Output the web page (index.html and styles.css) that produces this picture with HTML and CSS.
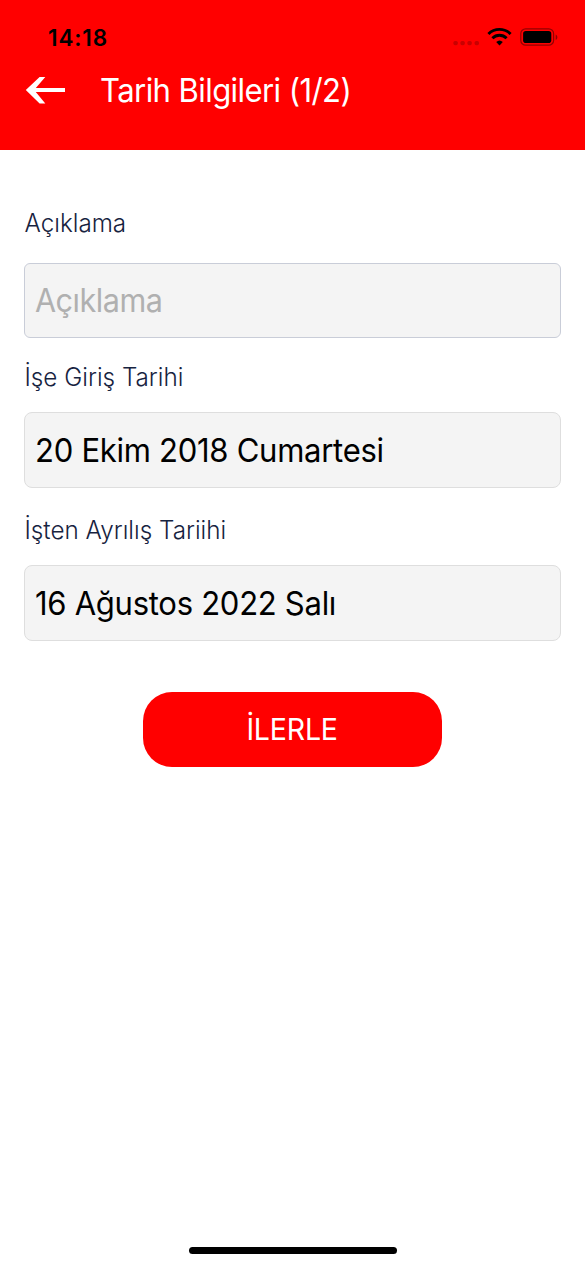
FILE: index.html
```html
<!DOCTYPE html>
<html lang="tr">
<head>
<meta charset="utf-8">
<title>Tarih Bilgileri</title>
<link rel="stylesheet" href="styles.css">
</head>
<body>
<div class="screen">
  <header class="header">
    <div class="status">
      <span class="time">14:18</span>
      <svg class="status-icons" width="106" height="24" viewBox="0 0 106 24">
        <g fill="#c90000">
          <rect x="0.4" y="16" width="4.4" height="4.2" rx="1.6"/>
          <rect x="7.4" y="16" width="4.4" height="4.2" rx="1.6"/>
          <rect x="14.4" y="16" width="4.4" height="4.2" rx="1.6"/>
          <rect x="21.6" y="16" width="4.4" height="4.2" rx="1.6"/>
        </g>
        <g fill="none" stroke="#000" stroke-width="2.9">
          <path d="M35.4 9a15.6 15.6 0 0 1 22.2 0"/>
          <path d="M39.4 13.2a10 10 0 0 1 14.2 0"/>
        </g>
        <path d="M46.5 20.5l-3.3-3.4a4.8 4.8 0 0 1 6.6 0z"/>
        <rect x="67.8" y="3.8" width="32.8" height="16.4" rx="4.8" fill="none" stroke="#930000" stroke-width="1.2"/>
        <rect x="70.1" y="6" width="28.2" height="12" rx="2.8"/>
        <path d="M102.7 9.4c2.2 1.2 2.2 4.4 0 5.6z" fill="#900000"/>
      </svg>
    </div>
    <div class="navbar">
      <svg class="back" width="42" height="30" viewBox="0 0 42 30">
        <path d="M40 13H10.8L20.3 2H14.6L.8 15l13.8 13.4h5.7L10.8 17H40z" fill="#fff"/>
      </svg>
      <h1 class="title">Tarih Bilgileri (1/2)</h1>
    </div>
  </header>
  <main class="form">
    <label class="label label-note">Açıklama</label>
    <div class="field field-note"><span class="value placeholder">Açıklama</span></div>
    <label class="label label-start">İşe Giriş Tarihi</label>
    <div class="field"><span class="value">20 Ekim 2018 Cumartesi</span></div>
    <label class="label label-end">İşten Ayrılış Tariihi</label>
    <div class="field"><span class="value">16 Ağustos 2022 Salı</span></div>
    <button class="next"><span class="next-text">İLERLE</span></button>
  </main>
  <div class="home-indicator"></div>
</div>
</body>
</html>
```
FILE: styles.css
```css
* { box-sizing: border-box; }
body {
  margin: 0;
  background: #fff;
  font-family: Inter, "Liberation Sans", sans-serif;
}
.screen {
  width: 585px;
  height: 1266px;
  display: flex;
  flex-direction: column;
  overflow: hidden;
}
.header {
  height: 149.6px;
  flex: none;
  background: #f00;
  padding-top: 25px;
}
.status {
  height: 24px;
  padding: 0 26px 0 48px;
  display: flex;
  justify-content: space-between;
  align-items: center;
}
.time {
  padding-top: 1px;
  font-size: 22.5px;
  line-height: 24px;
  font-weight: 590;
  letter-spacing: 0.9px;
}
.navbar {
  display: flex;
  align-items: center;
  height: 40px;
  margin-top: 21px;
  padding-left: 25px;
}
.title {
  margin: 2px 0 0 32.5px;
  font-size: 32.5px;
  line-height: 40px;
  font-weight: 400;
  letter-spacing: -0.6px;
  transform: scaleX(0.955);
  transform-origin: left;
  color: #fff;
  white-space: nowrap;
}
.form {
  flex: 1;
  padding: 57.4px 24px 0;
  display: flex;
  flex-direction: column;
}
.label {
  align-self: flex-start;
  padding-left: 0.5px;
  font-size: 25px;
  line-height: 32px;
  font-weight: 340;
  color: #17233f;
  white-space: nowrap;
  letter-spacing: 0;
  transform: scaleX(0.97);
  transform-origin: left;
}
.field {
  height: 76px;
  flex: none;
  margin-top: 19px;
  padding: 2px 10px 0;
  display: flex;
  align-items: center;
  border: 1px solid #dedede;
  border-radius: 8px;
  background: #f4f4f4;
  font-size: 32.5px;
  line-height: 40px;
  color: #000;
  white-space: nowrap;
}
.value {
  font-weight: 370;
  letter-spacing: -0.3px;
  transform: scaleX(0.955);
  transform-origin: left;
}
.field-note {
  height: 75px;
  margin-top: 24px;
  border-color: #c9cdd8;
  border-radius: 6px;
}
.placeholder {
  font-size: 32px;
  letter-spacing: -0.5px;
  color: #b0b0b0;
}
.label-start { margin-top: 23px; }
.label-end { margin-top: 26px; }
.next {
  width: 299.5px;
  height: 75px;
  flex: none;
  align-self: center;
  margin-top: 51px;
  padding: 0 0 1px;
  border: 0;
  border-radius: 29px;
  background: #f00;
  color: #fff;
  font-family: inherit;
  font-size: 30px;
  line-height: 36px;
}
.next-text {
  display: inline-block;
  letter-spacing: -0.2px;
  transform: scaleX(0.95);
}
.home-indicator {
  flex: none;
  align-self: center;
  width: 208px;
  height: 7px;
  margin-bottom: 12.5px;
  border-radius: 4px;
  background: #000;
}
```
